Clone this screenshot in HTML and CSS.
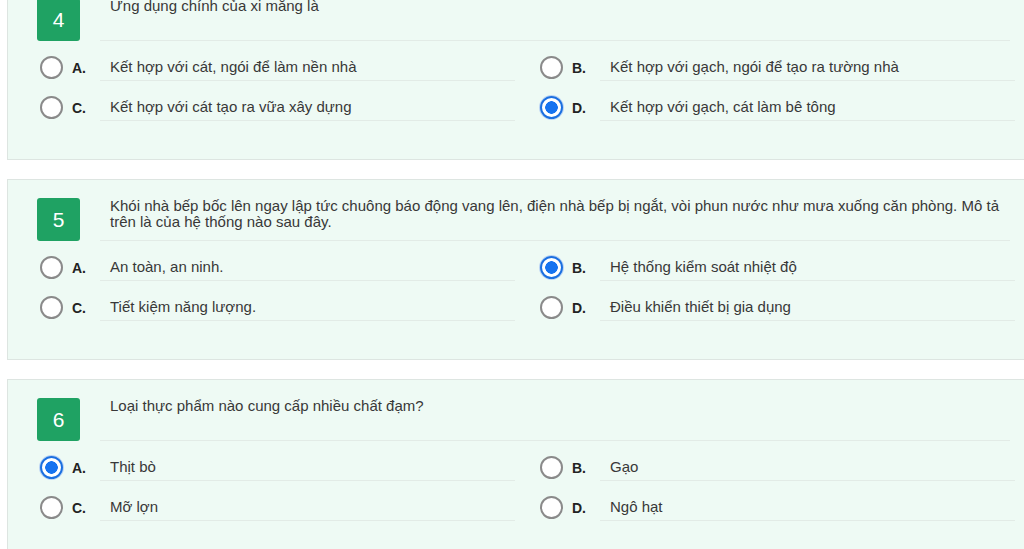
FILE: index.html
```html
<!DOCTYPE html>
<html lang="vi">
<head>
<meta charset="utf-8">
<title>Câu hỏi</title>
<link rel="stylesheet" href="styles.css">
</head>
<body>
<div class="list">
  <section class="card">
    <div class="qhead">
      <div class="badge">4</div>
      <div class="qtext">Ứng dụng chính của xi măng là</div>
    </div>
    <div class="options">
      <div class="opt"><span class="radio"></span><span class="lbl">A.</span><span class="atext">Kết hợp với cát, ngói để làm nền nhà</span></div>
      <div class="opt"><span class="radio"></span><span class="lbl">B.</span><span class="atext">Kết hợp với gạch, ngói để tạo ra tường nhà</span></div>
      <div class="opt"><span class="radio"></span><span class="lbl">C.</span><span class="atext">Kết hợp với cát tạo ra vữa xây dựng</span></div>
      <div class="opt"><span class="radio on"></span><span class="lbl">D.</span><span class="atext">Kết hợp với gạch, cát làm bê tông</span></div>
    </div>
  </section>
  <section class="card">
    <div class="qhead">
      <div class="badge">5</div>
      <div class="qtext">Khói nhà bếp bốc lên ngay lập tức chuông báo động vang lên, điện nhà bếp bị ngắt, vòi phun nước như mưa xuống căn phòng. Mô tả trên là của hệ thống nào sau đây.</div>
    </div>
    <div class="options">
      <div class="opt"><span class="radio"></span><span class="lbl">A.</span><span class="atext">An toàn, an ninh.</span></div>
      <div class="opt"><span class="radio on"></span><span class="lbl">B.</span><span class="atext">Hệ thống kiểm soát nhiệt độ</span></div>
      <div class="opt"><span class="radio"></span><span class="lbl">C.</span><span class="atext">Tiết kiệm năng lượng.</span></div>
      <div class="opt"><span class="radio"></span><span class="lbl">D.</span><span class="atext">Điều khiển thiết bị gia dụng</span></div>
    </div>
  </section>
  <section class="card">
    <div class="qhead">
      <div class="badge">6</div>
      <div class="qtext">Loại thực phẩm nào cung cấp nhiều chất đạm?</div>
    </div>
    <div class="options">
      <div class="opt"><span class="radio on"></span><span class="lbl">A.</span><span class="atext">Thịt bò</span></div>
      <div class="opt"><span class="radio"></span><span class="lbl">B.</span><span class="atext">Gạo</span></div>
      <div class="opt"><span class="radio"></span><span class="lbl">C.</span><span class="atext">Mỡ lợn</span></div>
      <div class="opt"><span class="radio"></span><span class="lbl">D.</span><span class="atext">Ngô hạt</span></div>
    </div>
  </section>
</div>
</body>
</html>
```
FILE: styles.css
```css
html, body {
  margin: 0;
  padding: 0;
  background: #ffffff;
  overflow: hidden;
}
body {
  font-family: "Liberation Sans", Arial, sans-serif;
  font-size: 15px;
  color: #383838;
}
.list {
  margin-top: -21px;
  padding-left: 7px;
  display: flex;
  flex-direction: column;
  gap: 19px;
}
.card {
  width: 1060px;
  box-sizing: border-box;
  background: #eefaf4;
  border: 1px solid #dde5e1;
  padding: 18px 0 38px 29px;
}
.qhead {
  display: flex;
  align-items: flex-start;
}
.badge {
  flex: 0 0 43px;
  height: 43px;
  background: #1fa263;
  color: #ffffff;
  border-radius: 3px;
  font-size: 21px;
  display: flex;
  align-items: center;
  justify-content: center;
}
.qtext {
  margin-left: 20px;
  width: 900px;
  min-height: 42px;
  padding-left: 10px;
  line-height: 16px;
  border-bottom: 1px solid #e2ebe6;
}
.options {
  display: grid;
  grid-template-columns: 500px 500px;
}
.opt {
  display: flex;
  align-items: flex-end;
  height: 40px;
}
.radio {
  width: 23px;
  height: 23px;
  box-sizing: border-box;
  margin-left: 3px;
  margin-bottom: 2px;
  border-radius: 50%;
  border: 2px solid #8a8a8a;
  background: #ffffff;
  flex: 0 0 auto;
}
.radio.on {
  border-color: #1b6fe0;
  background: radial-gradient(circle, #1673f0 0 6px, #ffffff 6.5px);
  box-shadow: 0 0 0 1px #b9d3f5;
}
.lbl {
  width: 28px;
  margin-left: 9px;
  font-size: 14px;
  font-weight: bold;
  color: #222222;
  line-height: 16px;
  padding-bottom: 5px;
}
.atext {
  flex: 0 0 auto;
  width: 405px;
  padding-left: 10px;
  line-height: 16px;
  padding-bottom: 5px;
  border-bottom: 1px solid #e2ebe6;
}
```
